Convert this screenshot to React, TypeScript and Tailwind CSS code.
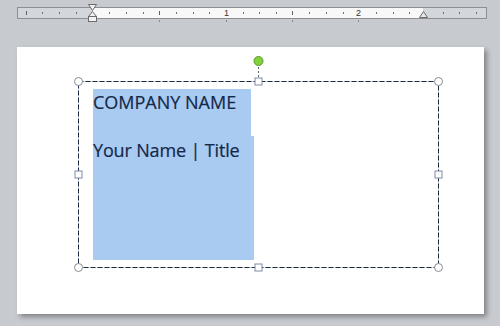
import React from 'react';

const smallTicks = [42, 59, 76, 109, 126, 143, 176, 193, 209, 243, 259, 276, 309, 326, 343, 376, 393, 409, 443, 459, 476];
const halfTicks = [26, 159, 292];
const tabStops = [159, 226, 292, 358];

const Ruler = () => (
  <svg width={500} height={26} className="block">
    <rect x={17.5} y={7.5} width={469} height={11} fill="#d3d6da" stroke="#8c9095" />
    <rect x={92} y={8} width={331} height={10} fill="#f8f8f8" />
    {smallTicks.map((x) => (
      <rect key={x} x={x} y={12} width={1} height={2} fill="#707070" />
    ))}
    {halfTicks.map((x) => (
      <rect key={x} x={x} y={11} width={1} height={4} fill="#606060" />
    ))}
    <text x={226.5} y={16} textAnchor="middle" fontSize={9} fill="#333333" fontFamily="'Liberation Sans', sans-serif">1</text>
    <text x={358.5} y={16} textAnchor="middle" fontSize={9} fill="#333333" fontFamily="'Liberation Sans', sans-serif">2</text>
    {tabStops.map((x) => (
      <rect key={x} x={x} y={20} width={1} height={2} fill="#8a8a8a" />
    ))}
    {/* indent markers on the left */}
    <path d="M88.5 4.5 H96.5 L92.5 10.5 Z" fill="#f2f2f2" stroke="#6b6b6b" />
    <path d="M92.5 11.5 L96.5 16.5 H88.5 Z" fill="#f2f2f2" stroke="#6b6b6b" />
    <rect x={88.5} y={16.5} width={8} height={5} fill="#f2f2f2" stroke="#6b6b6b" />
    {/* right indent */}
    <path d="M423.5 11.5 L427.5 17.5 H419.5 Z" fill="#e6e6e6" stroke="#6b6b6b" />
  </svg>
);

const Handles = () => {
  // frame corner sits at (6,26) inside the overlay
  const L = 6.5;
  const T = 26.5;
  const R = L + 360;
  const B = T + 186;
  const MX = L + 180;
  const MY = T + 93;
  const circles = [
    [L, T],
    [R, T],
    [L, B],
    [R, B],
  ];
  const squares = [
    [MX, T],
    [MX, B],
    [L, MY],
    [R, MY],
  ];
  return (
    <svg width={374} height={220} className="absolute -left-[6px] -top-[26px] pointer-events-none">
      <rect x={L} y={T} width={360} height={186} fill="none" stroke="#d8dde6" />
      <rect x={L} y={T} width={360} height={186} fill="none" stroke="#1c2b45" strokeDasharray="5 2" />
      <line x1={MX} y1={12} x2={MX} y2={T - 3} stroke="#5a6272" strokeDasharray="2 2" />
      <circle cx={MX} cy={6} r={4.5} fill="#82d13f" stroke="#5c9b2c" />
      {circles.map(([x, y], i) => (
        <circle key={i} cx={x} cy={y} r={4} fill="#ffffff" stroke="#878c94" />
      ))}
      {squares.map(([x, y], i) => (
        <rect key={i} x={x - 3.5} y={y - 3.5} width={7} height={7} fill="#ffffff" stroke="#7d8ca5" />
      ))}
    </svg>
  );
};

export default function App() {
  return (
    <div className="w-[500px] h-[326px] overflow-hidden bg-[#c7cacf]">
      <Ruler />
      <div className="ml-[17px] mt-[21px] w-[467px] h-[267px] bg-white shadow-[3px_3px_5px_rgba(0,0,0,0.35)] pl-[61px] pt-[34px]">
        <div className="relative w-[360px] h-[186px] pl-[15px] pt-[8px]">
          <div
            className="text-[18px] text-[#14284a] [-webkit-text-stroke:0.2px_#14284a]"
            style={{ fontFamily: "'Open Sans', 'Liberation Sans', sans-serif" }}
          >
            <div className="w-[158px] h-[47px] bg-[#a9cbf1] leading-[24px] pt-[1px] whitespace-nowrap">COMPANY NAME</div>
            <div className="w-[161px] h-[124px] bg-[#a9cbf1] leading-[24px] pt-[2px] whitespace-nowrap tracking-[-0.15px]">Your Name | Title</div>
          </div>
          <Handles />
        </div>
      </div>
    </div>
  );
}
